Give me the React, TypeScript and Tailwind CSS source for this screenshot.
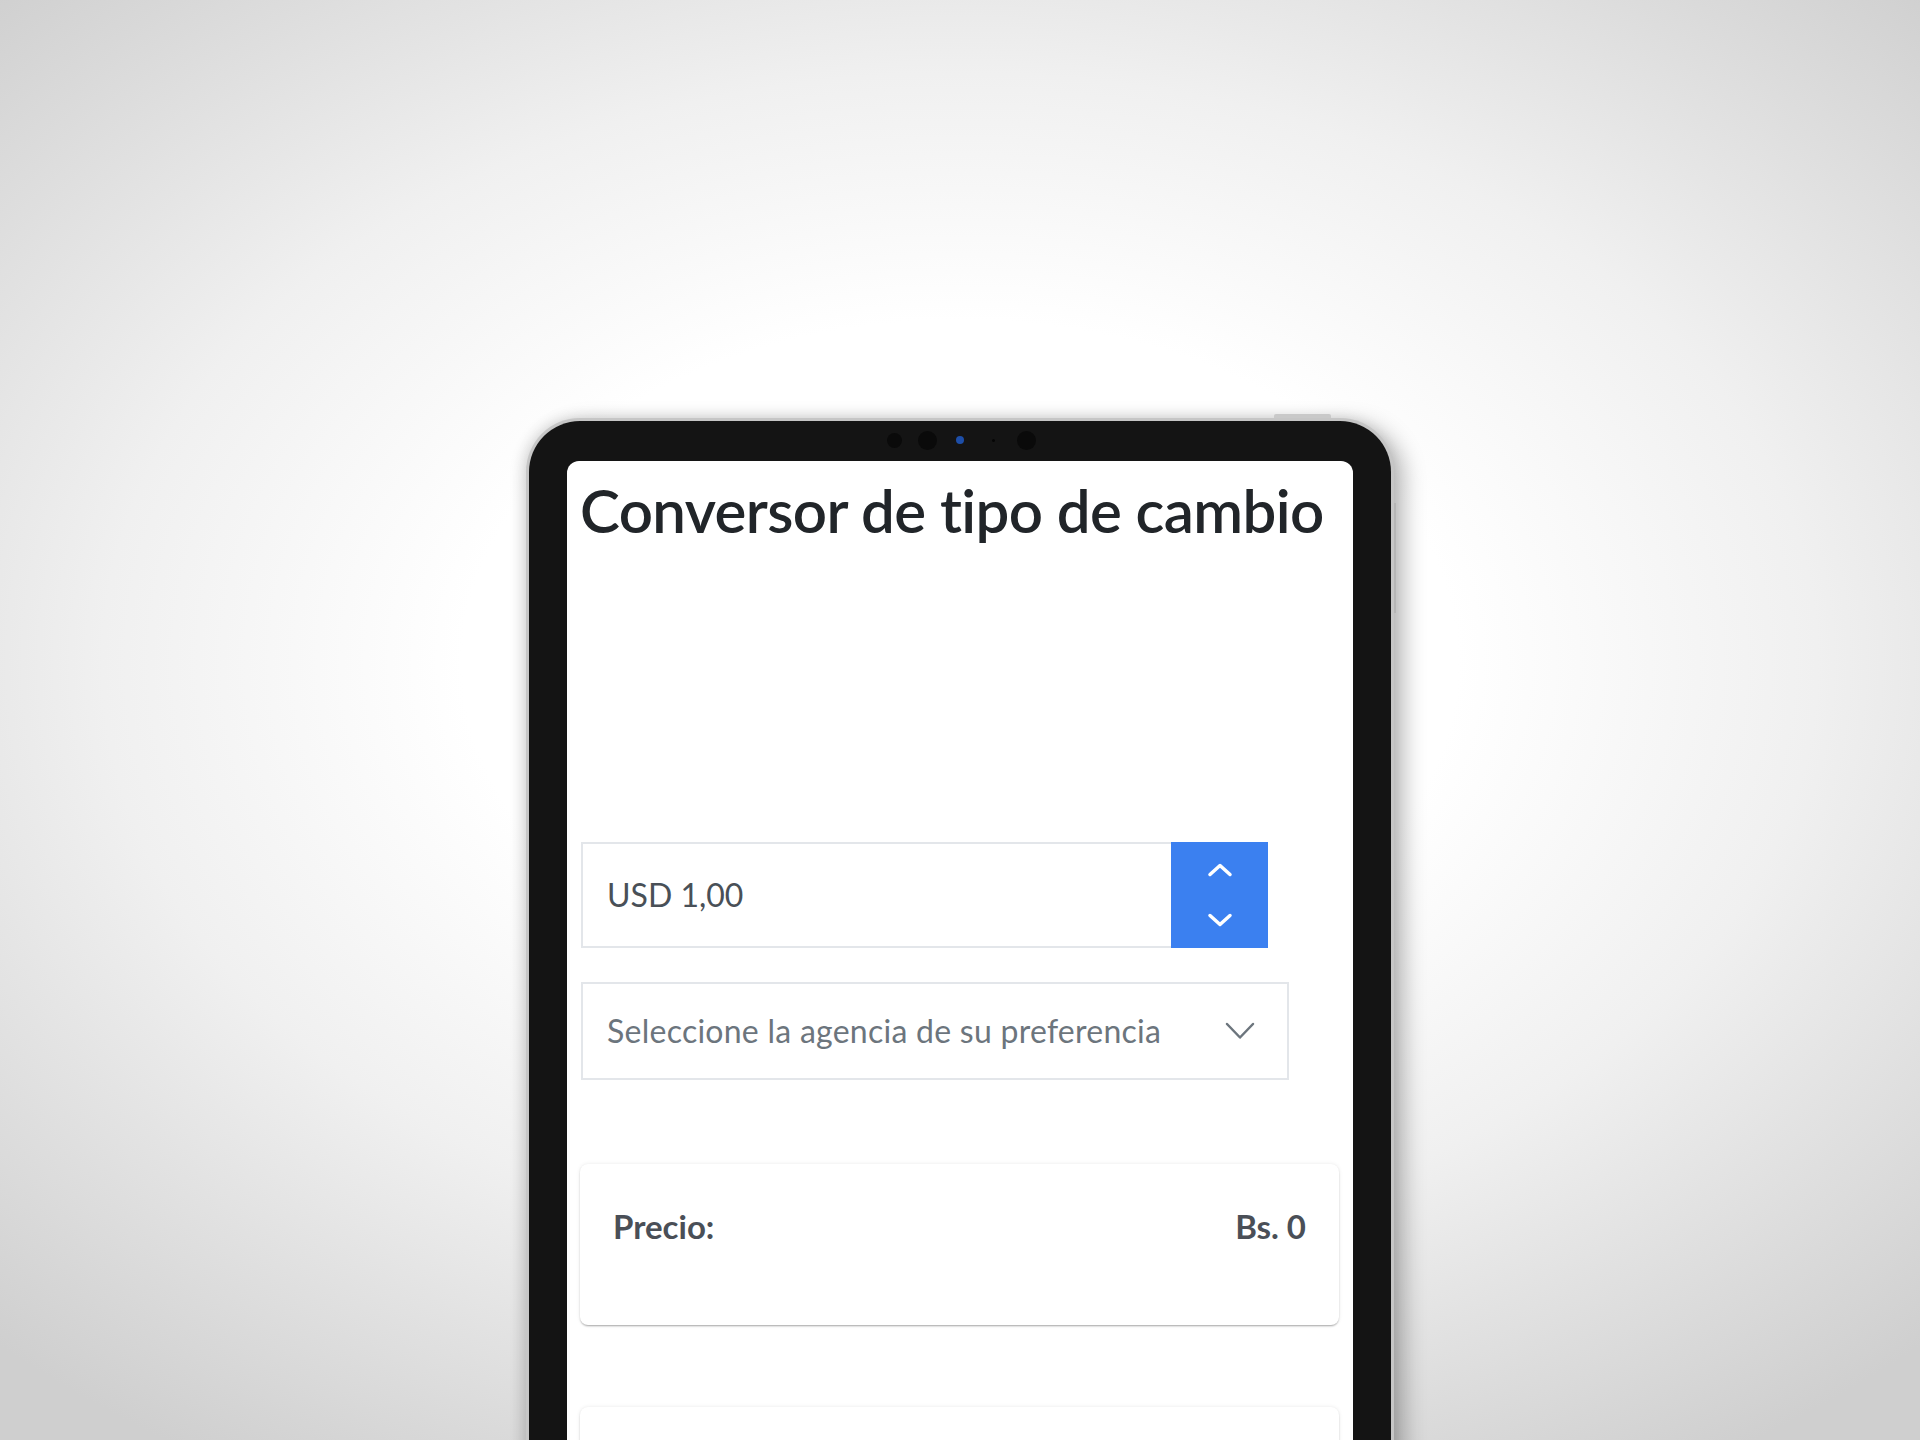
import React from "react"

const FONT = "font-['Lato','Open_Sans',sans-serif]"

function CaretUp() {
  return (
    <svg width="26" height="16" viewBox="0 0 26 16" fill="none">
      <polyline points="3,12.5 13,3.5 23,12.5" stroke="#ffffff" strokeWidth="3.5" strokeLinecap="round" strokeLinejoin="round" />
    </svg>
  )
}

function CaretDown() {
  return (
    <svg width="26" height="16" viewBox="0 0 26 16" fill="none">
      <polyline points="3,3.5 13,12.5 23,3.5" stroke="#ffffff" strokeWidth="3.5" strokeLinecap="round" strokeLinejoin="round" />
    </svg>
  )
}

function SelectChevron() {
  return (
    <svg width="30" height="18" viewBox="0 0 30 18" fill="none">
      <polyline points="2,2 15,15.5 28,2" stroke="#6c757d" strokeWidth="2.5" strokeLinecap="round" strokeLinejoin="round" />
    </svg>
  )
}

// front camera / sensors strip in the top bezel
function CameraBar() {
  return (
    <div className="flex h-[40px] shrink-0 items-center justify-center pb-[2px]">
      <div className="flex w-[33px] justify-center">
        <span className="h-[15px] w-[15px] rounded-full bg-[#0a0a0a]" />
      </div>
      <div className="flex w-[33px] justify-center">
        <span className="h-[19px] w-[19px] rounded-full bg-[#0a0a0a]" />
      </div>
      <div className="flex w-[33px] justify-center">
        <span className="h-[8px] w-[8px] rounded-full bg-[#1d4ea8]" />
      </div>
      <div className="flex w-[33px] justify-center">
        <span className="h-[3px] w-[3px] rounded-full bg-[#050505]" />
      </div>
      <div className="flex w-[33px] justify-center">
        <span className="h-[19px] w-[19px] rounded-full bg-[#0a0a0a]" />
      </div>
    </div>
  )
}

function AmountInput() {
  return (
    <div className="ml-[14px] flex h-[106px] w-[687px]">
      <div className="flex flex-1 items-center border-2 border-r-0 border-[#e3e6ea] bg-white pl-[24px]">
        <span className="text-[32px] leading-none text-[#495057]">USD 1,00</span>
      </div>
      <div className="flex w-[97px] flex-col items-center justify-center gap-[34px] bg-[#3b80f0]">
        <CaretUp />
        <CaretDown />
      </div>
    </div>
  )
}

function AgencySelect() {
  return (
    <div className="ml-[14px] mt-[34px] flex h-[98px] w-[708px] items-center justify-between border-2 border-[#e3e6ea] bg-white pl-[24px] pr-[32px]">
      <span className="text-[32px] leading-none tracking-[0.008em] text-[#6c757d]">Seleccione la agencia de su preferencia</span>
      <SelectChevron />
    </div>
  )
}

function ResultCard({ label, value }: { label: string; value: string }) {
  return (
    <div className="ml-[13px] mr-[14px] h-[161px] rounded-[8px] bg-white pl-[33px] pr-[33px] pt-[43px] shadow-[0_2px_2px_-1px_rgba(0,0,0,0.22),0_1px_2px_0_rgba(0,0,0,0.12),0_0_4px_0_rgba(0,0,0,0.08)]">
      <div className="flex items-start justify-between text-[33px] font-bold leading-[1.2] text-[#4a4f57]">
        <span>{label}</span>
        <span>{value}</span>
      </div>
    </div>
  )
}

export default function App() {
  return (
    <div className={`relative h-[1440px] w-full overflow-hidden bg-[radial-gradient(ellipse_72%_66%_at_50%_46%,#ffffff_36%,#f0f0f0_62%,#cfcfcf_100%)] pt-[418px] ${FONT}`}>
      <div className="relative mx-auto flex h-[1100px] w-[868px] flex-col rounded-t-[54px] border-[3px] border-b-0 border-[#c6c6c6] bg-[#141414] px-[38px] shadow-[10px_6px_22px_rgba(0,0,0,0.28),-4px_0_14px_rgba(0,0,0,0.12)]">
        {/* power button on the top edge */}
        <span className="absolute -top-[7px] right-[60px] h-[4px] w-[57px] rounded-t-[2px] bg-[#c9c9c9]" />
        {/* volume buttons on the right edge */}
        <span className="absolute -right-[5px] top-[82px] h-[110px] w-[2px] bg-[#b5b5b5]" />

        <CameraBar />

        <div className="flex-1 rounded-t-[12px] bg-white">
          <h1 className="pl-[13px] pt-[13px] text-[60px] font-semibold leading-[1.2] tracking-[-0.01em] text-[#212529]">
            Conversor de tipo de cambio
          </h1>

          <div className="mt-[296px]">
            <AmountInput />
            <AgencySelect />
          </div>

          <div className="mt-[84px] flex flex-col gap-[82px]">
            <ResultCard label="Precio:" value="Bs. 0" />
            <ResultCard label="" value="" />
          </div>
        </div>
      </div>
    </div>
  )
}
